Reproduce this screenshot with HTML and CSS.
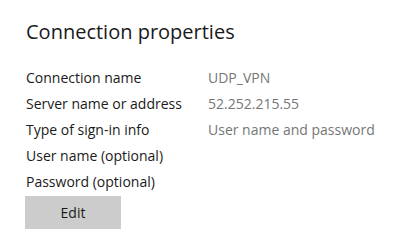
FILE: index.html
```html
<!DOCTYPE html>
<html lang="en">
<head>
  <meta charset="UTF-8">
  <title>Connection properties</title>
  <link rel="stylesheet" href="styles.css">
</head>
<body>
  <div class="panel">
    <h1 class="title">Connection properties</h1>

    <div class="props">
      <div class="prop">
        <span class="label">Connection name</span>
        <span class="value">UDP_VPN</span>
      </div>
      <div class="prop">
        <span class="label">Server name or address</span>
        <span class="value">52.252.215.55</span>
      </div>
      <div class="prop">
        <span class="label">Type of sign-in info</span>
        <span class="value">User name and password</span>
      </div>
      <div class="prop">
        <span class="label">User name (optional)</span>
        <span class="value"></span>
      </div>
      <div class="prop">
        <span class="label">Password (optional)</span>
        <span class="value"></span>
      </div>
    </div>

    <button class="edit-btn">Edit</button>
  </div>
</body>
</html>
```

FILE: styles.css
```css
* {
  margin: 0;
  padding: 0;
  box-sizing: border-box;
}

html, body {
  height: 100%;
  background-color: #fff;
  font-family: "Open Sans", "Noto Sans", Arial, sans-serif;
  color: #1a1a1a;
  overflow: hidden;
}

.panel {
  padding: 18px 25px 0 26px;
}

.title {
  font-size: 20px;
  font-weight: 400;
  line-height: 28px;
  margin-bottom: 18px;
}

.props {
  display: flex;
  flex-direction: column;
}

.prop {
  display: grid;
  grid-template-columns: 182px 1fr;
  height: 26px;
  align-items: center;
  font-size: 14px;
}

.value {
  color: #767676;
}

.edit-btn {
  margin-top: 2px;
  margin-left: -1px;
  width: 96px;
  height: 33px;
  border: none;
  background-color: #cccccc;
  font-family: inherit;
  font-size: 14px;
  color: #1a1a1a;
}
```
